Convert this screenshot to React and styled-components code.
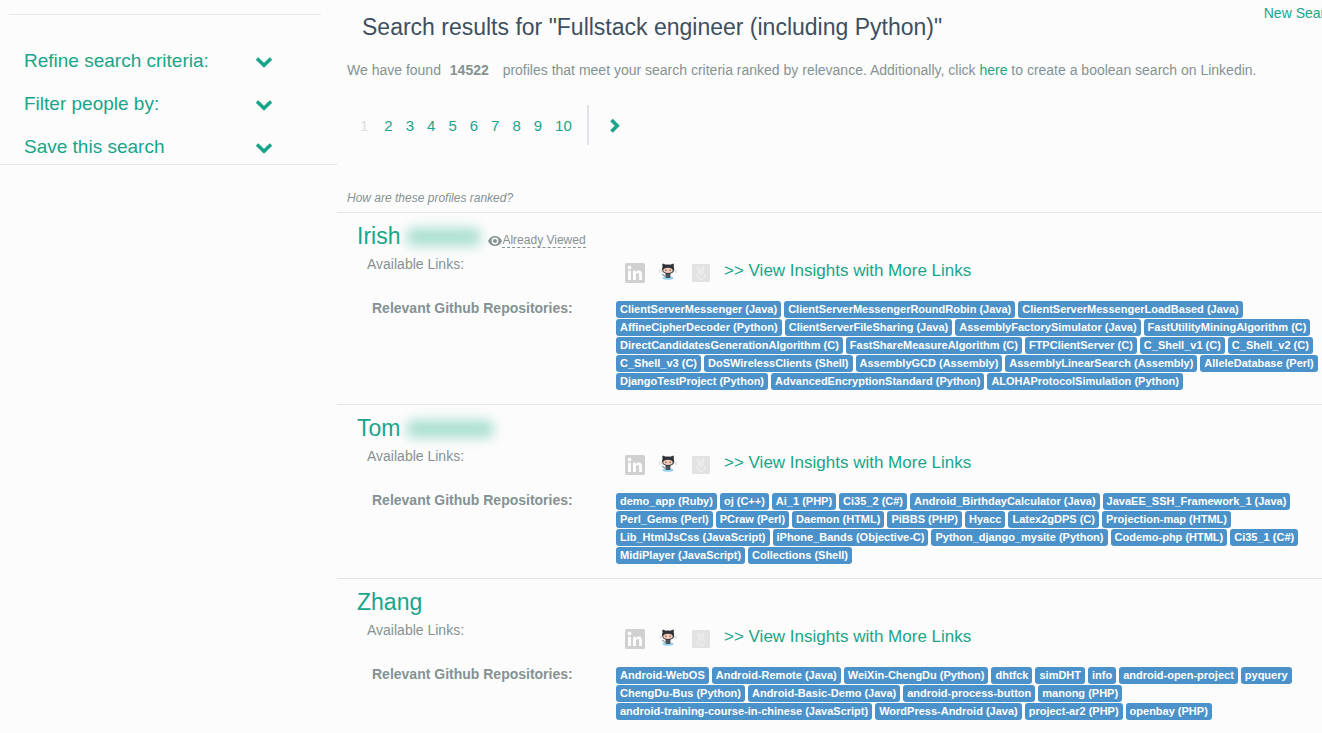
import React from "react";
import styled, { createGlobalStyle, css } from "styled-components";

const GREEN = "#18a58a";
const GREY = "#859292";

const GlobalStyle = createGlobalStyle`
  *, *::before, *::after { box-sizing: border-box; }
  body {
    margin: 0;
    background: #fcfcfc;
    color: ${GREY};
    font: 14px/20px "Liberation Sans", Arial, sans-serif;
    overflow-x: hidden;
  }
`;

const Page = styled.div`
  display: flex;
  align-items: flex-start;
  margin-right: -26px;
`;

const Sidebar = styled.aside`
  flex: 0 0 25%;
  padding-top: 14px;
  border-bottom: 1px solid #e2e4e6;
`;

const SidebarRule = styled.hr`
  height: 1px;
  margin: 0 16px 0 9px;
  border: 0;
  background: #e7e9ea;
`;

const SidebarList = styled.div`
  display: flex;
  flex-direction: column;
  gap: 15px;
  padding: 32px 64px 3px 24px;
`;

const SidebarToggle = styled.button`
  display: flex;
  align-items: center;
  justify-content: space-between;
  padding: 0;
  border: 0;
  background: none;
  color: ${GREEN};
  font: inherit;
  font-size: 19px;
  line-height: 28px;
  text-align: left;
  cursor: pointer;
`;

const ChevronIcon = styled.svg`
  display: block;
  width: 18px;
  height: 18px;
  fill: none;
  stroke: ${GREEN};
  stroke-width: 3.6;
`;

const Main = styled.main`
  flex: 1 1 0;
  min-width: 0;
`;

const Header = styled.header`
  display: flex;
  justify-content: space-between;
  padding: 3px 8px 0 25px;
`;

const Title = styled.h1`
  margin: 8px 0 0;
  color: #3d4f61;
  font-size: 23px;
  font-weight: 400;
  line-height: 32px;
`;

const Link = styled.a`
  color: ${GREEN};
  text-decoration: none;
`;

const Summary = styled.p`
  margin: 17px 0 0;
  padding-left: 10px;
`;

const Count = styled.strong`
  margin: 0 10px 0 5px;
`;

const Pager = styled.nav`
  display: flex;
  align-items: center;
  height: 40px;
  margin: 25px 0 0 17px;
  font-size: 15px;
`;

const PageList = styled.div`
  display: flex;
  gap: 13px;
  padding: 2px 15px 0 6px;
`;

const PageLink = styled(Link)`
  ${(p) =>
    p.$current &&
    css`
      margin-right: 3px;
      color: #d9dee1;
    `}
`;

const NextLink = styled.a`
  display: flex;
  align-items: center;
  align-self: stretch;
  padding-left: 17px;
  border-left: 2px solid #e2e2e8;
`;

const RankNote = styled.p`
  margin: 43px 0 4px;
  padding-left: 10px;
  font-size: 12px;
  font-style: italic;
`;

const Profile = styled.article`
  padding: 8px 0 14px;
  border-top: 1px solid #e2e4e6;
`;

const NameRow = styled.div`
  display: flex;
  align-items: center;
  height: 31px;
  padding-left: 20px;
`;

const Name = styled.h2`
  margin: 0;
  font-size: 23px;
  font-weight: 400;
  line-height: 31px;
`;

const HiddenName = styled.span`
  width: ${(p) => p.$width}px;
  height: 18px;
  margin: 0 7px 0 6px;
  border-radius: 8px;
  background: #abdfd2;
  filter: blur(6px);
`;

const Viewed = styled.span`
  display: flex;
  align-items: center;
  margin-top: 8px;
  font-size: 12px;
  line-height: 14px;
`;

const ViewedText = styled.span`
  border-bottom: 1px dashed ${GREY};
`;

const Row = styled.div`
  display: grid;
  grid-template-columns: 279px minmax(0, 1fr);
`;

const LinksRow = styled(Row)`
  height: 38px;
`;

const LinksLabel = styled.div`
  padding: 2px 0 0 30px;
`;

const Links = styled.div`
  display: flex;
  align-items: flex-start;
  padding: 11px 0 0 9px;
`;

const IconLink = styled.a`
  display: block;
  width: ${(p) => p.$width}px;
`;

const InsightsLink = styled(Link)`
  margin-top: -2px;
  font-size: 17px;
  line-height: 20px;
`;

const ReposRow = styled(Row)`
  margin-top: 11px;
`;

const ReposLabel = styled.strong`
  padding: 0 0 0 35px;
  line-height: 15px;
`;

const Tags = styled.div`
  display: flex;
  flex-wrap: wrap;
  gap: 1px 3px;
`;

const Tag = styled.a`
  height: 17px;
  padding: 0 4px;
  border-radius: 3px;
  background: #4c92ca;
  color: #fff;
  font-size: 11px;
  font-weight: 700;
  line-height: 17px;
  text-decoration: none;
  white-space: nowrap;
`;

function LinkedInIcon() {
  return (
    <svg width="20" height="20" viewBox="0 0 20 20">
      <rect width="20" height="20" rx="1.5" fill="#d0d0d0" />
      <g fill="#fcfcfc">
        <circle cx="4.5" cy="4.5" r="1.9" />
        <path d="M3 7.700h3V17H3zM8 7.700h2.800V9c.6-1 1.600-1.600 2.900-1.600 2.500 0 3.400 1.600 3.400 4.200V17h-3v-4.700c0-1.300-.3-2.200-1.500-2.200s-1.600.9-1.600 2.200V17H8z" />
      </g>
    </svg>
  );
}

function OctocatIcon() {
  return (
    <svg width="20" height="20" viewBox="0 0 20 20">
      <ellipse cx="10" cy="15" rx="5.500" ry="1.800" fill="#93d3f0" />
      <path d="M7.500 10h5v4.500c-1 .8-4 .8-5 0z" fill="#4a5258" />
      <path d="M8 13c-2.200.4-2.500-1.500-4-2" fill="none" stroke="#7f9ba8" strokeWidth="1.200" />
      <path d="M.5 7l3.500.7M1 9.200L4 8.700M19.500 7l-3.500.7M19 9.200l-3-.5" stroke="#dedede" strokeWidth="1" />
      <path d="M4.800.5l3.200 1.200c1.300-.3 2.900-.3 4.200 0L15.400.5c.6 1.200.5 2 .3 2.900.8 1.500.6 5-.8 6-2.500 1.700-7.100 1.700-9.500 0-1.500-1-1.600-4.500-.8-6C4.200 2.500 4.200 1.500 4.800.5z" fill="#303238" />
      <ellipse cx="10" cy="7.300" rx="4.700" ry="2.600" fill="#f3cdbb" />
      <ellipse cx="7.900" cy="7.200" rx=".8" ry="1" fill="#a66a5e" />
      <ellipse cx="12.100" cy="7.200" rx=".8" ry="1" fill="#a66a5e" />
    </svg>
  );
}

function AngelListIcon() {
  return (
    <svg width="18" height="20" viewBox="0 0 18 20">
      <rect y="1" width="18" height="18" rx="1.500" fill="#e2e2e2" />
      <g fill="none" stroke="#f2f2f2" strokeWidth="1" strokeLinejoin="round" strokeLinecap="round">
        <path d="M7.200 9.500L5.300 5.300c-.3-1.200 1-1.700 1.600-.7L8.700 9l1.700-4.700c.4-1.100 1.900-.6 1.600.6l-1.500 4.800" />
        <path d="M10.500 9.700c1.600.2 2.200.9 2 2.500-.3 2.700-1.600 4.300-3.800 4.300-2 0-3.600-1.500-3.800-3.200-.1-1.200.8-1.600 1.700-.8l1.500 1.200M5.500 11.800c-.5-1.400.6-2.500 1.700-2.300 1.300.3 2 1.400 2.100 2.500M8 10.200l3 .9" />
      </g>
    </svg>
  );
}

function EyeIcon() {
  return (
    <svg width="14" height="12" viewBox="0 0 14 12">
      <path d="M7 1C3.800 1 1.200 3 0 6c1.200 3 3.800 5 7 5s5.800-2 7-5c-1.200-3-3.800-5-7-5z" fill={GREY} />
      <circle cx="7" cy="6" r="3.400" fill="#fcfcfc" />
      <circle cx="7" cy="6" r="2" fill={GREY} />
    </svg>
  );
}

const filters = ["Refine search criteria:", "Filter people by:", "Save this search"];

const profiles = [
  {
    name: "Irish",
    hidden: 75,
    viewed: true,
    repos: [
      "ClientServerMessenger (Java)", "ClientServerMessengerRoundRobin (Java)", "ClientServerMessengerLoadBased (Java)",
      "AffineCipherDecoder (Python)", "ClientServerFileSharing (Java)", "AssemblyFactorySimulator (Java)",
      "FastUtilityMiningAlgorithm (C)", "DirectCandidatesGenerationAlgorithm (C)", "FastShareMeasureAlgorithm (C)",
      "FTPClientServer (C)", "C_Shell_v1 (C)", "C_Shell_v2 (C)", "C_Shell_v3 (C)", "DoSWirelessClients (Shell)",
      "AssemblyGCD (Assembly)", "AssemblyLinearSearch (Assembly)", "AlleleDatabase (Perl)",
      "DjangoTestProject (Python)", "AdvancedEncryptionStandard (Python)", "ALOHAProtocolSimulation (Python)",
    ],
  },
  {
    name: "Tom",
    hidden: 88,
    repos: [
      "demo_app (Ruby)", "oj (C++)", "Ai_1 (PHP)", "Ci35_2 (C#)", "Android_BirthdayCalculator (Java)",
      "JavaEE_SSH_Framework_1 (Java)", "Perl_Gems (Perl)", "PCraw (Perl)", "Daemon (HTML)", "PiBBS (PHP)", "Hyacc",
      "Latex2gDPS (C)", "Projection-map (HTML)", "Lib_HtmlJsCss (JavaScript)", "iPhone_Bands (Objective-C)",
      "Python_django_mysite (Python)", "Codemo-php (HTML)", "Ci35_1 (C#)", "MidiPlayer (JavaScript)",
      "Collections (Shell)",
    ],
  },
  {
    name: "Zhang",
    repos: [
      "Android-WebOS", "Android-Remote (Java)", "WeiXin-ChengDu (Python)", "dhtfck", "simDHT", "info",
      "android-open-project", "pyquery", "ChengDu-Bus (Python)", "Android-Basic-Demo (Java)",
      "android-process-button", "manong (PHP)", "android-training-course-in-chinese (JavaScript)",
      "WordPress-Android (Java)", "project-ar2 (PHP)", "openbay (PHP)",
    ],
  },
];

function ProfileCard({ profile }) {
  return (
    <Profile>
      <NameRow>
        <Name>
          <Link href="#profile">{profile.name}</Link>
        </Name>
        {profile.hidden && <HiddenName $width={profile.hidden} />}
        {profile.viewed && (
          <Viewed>
            <EyeIcon />
            <ViewedText>Already Viewed</ViewedText>
          </Viewed>
        )}
      </NameRow>
      <LinksRow>
        <LinksLabel>Available Links:</LinksLabel>
        <Links>
          <IconLink $width={33} href="#linkedin" aria-label="LinkedIn"><LinkedInIcon /></IconLink>
          <IconLink $width={34} href="#github" aria-label="GitHub"><OctocatIcon /></IconLink>
          <IconLink $width={32} href="#angellist" aria-label="AngelList"><AngelListIcon /></IconLink>
          <InsightsLink href="#insights">&gt;&gt; View Insights with More Links</InsightsLink>
        </Links>
      </LinksRow>
      <ReposRow>
        <ReposLabel>Relevant Github Repositories:</ReposLabel>
        <Tags>
          {profile.repos.map((repo) => (
            <Tag key={repo} href="#repo">{repo}</Tag>
          ))}
        </Tags>
      </ReposRow>
    </Profile>
  );
}

export default function App() {
  return (
    <>
      <GlobalStyle />
      <Page>
        <Sidebar>
          <SidebarRule />
          <SidebarList>
            {filters.map((label) => (
              <SidebarToggle key={label} type="button">
                {label}
                <ChevronIcon viewBox="0 0 18 18"><path d="M2 6.500l7 6.700 7-6.700" /></ChevronIcon>
              </SidebarToggle>
            ))}
          </SidebarList>
        </Sidebar>
        <Main>
          <Header>
            <Title>Search results for "Fullstack engineer (including Python)"</Title>
            <Link href="#new">New Search</Link>
          </Header>
          <Summary>
            We have found <Count>14522</Count> profiles that meet your search criteria ranked by relevance.
            Additionally, click <Link href="#boolean">here</Link> to create a boolean search on Linkedin.
          </Summary>
          <Pager aria-label="Result pages">
            <PageList>
              {[1, 2, 3, 4, 5, 6, 7, 8, 9, 10].map((n) => (
                <PageLink key={n} href={`#page-${n}`} $current={n === 1}>{n}</PageLink>
              ))}
            </PageList>
            <NextLink href="#next" aria-label="Next page">
              <ChevronIcon viewBox="0 0 18 18"><path d="M5.500 4l5.700 5.700-5.700 5.700" /></ChevronIcon>
            </NextLink>
          </Pager>
          <RankNote>How are these profiles ranked?</RankNote>
          {profiles.map((profile) => (
            <ProfileCard key={profile.name} profile={profile} />
          ))}
        </Main>
      </Page>
    </>
  );
}
